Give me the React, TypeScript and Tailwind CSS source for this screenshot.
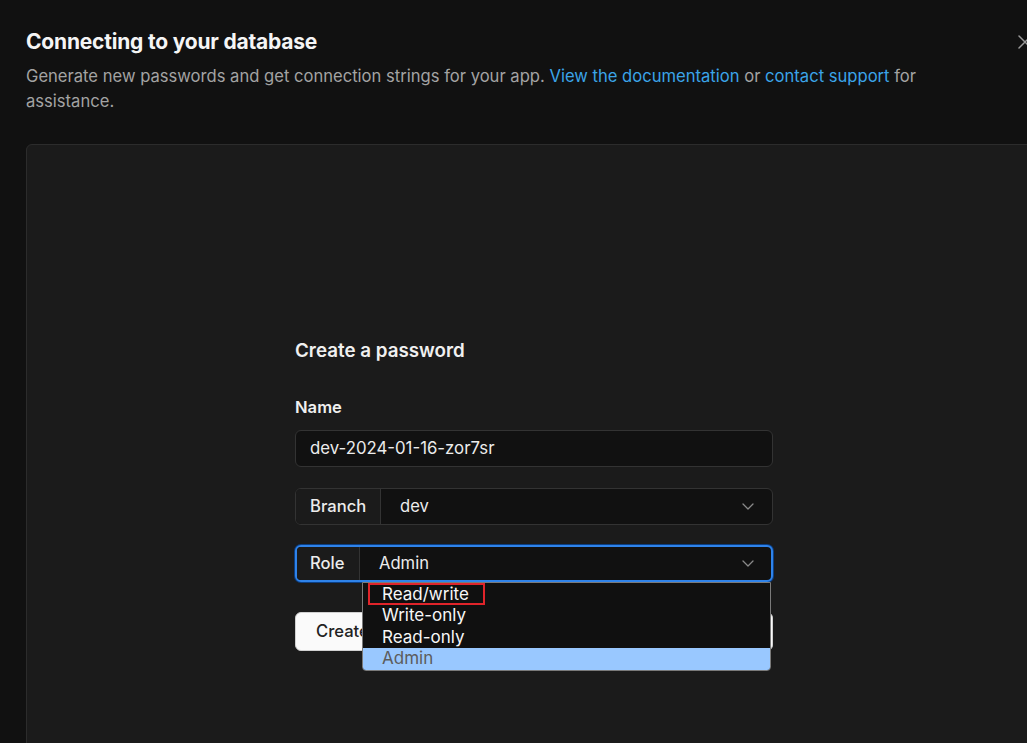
import React from "react";

function Chevron() {
  return (
    <svg width="12" height="7" viewBox="0 0 12 7" fill="none" className="shrink-0">
      <path d="M1 1l5 5 5-5" stroke="#8a8a8a" strokeWidth="1.3" strokeLinecap="round" strokeLinejoin="round" />
    </svg>
  );
}

export default function App() {
  return (
    <div
      className="relative w-[1027px] h-[743px] overflow-hidden bg-[#111111]"
      style={{ fontFamily: "Inter, 'Noto Sans', sans-serif" }}
    >
      <div className="w-[1068px] px-[26px] pt-[28px]">
        <h1 className="text-[21px] leading-[28px] font-bold text-[#f5f5f5] tracking-[-0.2px]">
          Connecting to your database
        </h1>
        <p className="mt-2 w-[930px] text-[16.6px] leading-[25px] text-[#a3a3a3]">
          Generate new passwords and get connection strings for your app.{" "}
          <span className="text-[#3ba4e8]">View the documentation</span> or{" "}
          <span className="text-[#3ba4e8]">contact support</span> for assistance.
        </p>
        <div className="mt-[30px] h-[700px] rounded-md border border-[#2c2c2c] bg-[#1b1b1b] pt-[192px]">
          <div className="relative mx-auto w-[478px]">
            <h2 className="text-[18.8px] leading-[28px] font-semibold text-[#f0f0f0]">Create a password</h2>
            <div className="mt-[30px] text-[16.6px] leading-[24px] font-semibold text-[#f0f0f0]">Name</div>
            <div className="mt-[11px] flex h-[37px] items-center rounded-md border border-[#333333] bg-[#111111] px-[14px] text-[16.8px] text-[#ececec]">
              dev-2024-01-16-zor7sr
            </div>
            <div className="mt-[21px] flex h-[37px] overflow-hidden rounded-md border border-[#333333] bg-[#111111] text-[16.6px]">
              <div className="flex w-[85px] items-center border-r border-[#333333] bg-[#1b1b1b] pl-[14px] font-medium text-[#ececec]">
                Branch
              </div>
              <div className="flex flex-1 items-center justify-between pl-[19px] pr-[18px] text-[#ececec]">
                <span>dev</span>
                <Chevron />
              </div>
            </div>
            <div className="mt-[20px] flex h-[37px] overflow-hidden rounded-md border-2 border-[#2f83ea] bg-[#111111] text-[16.6px] shadow-[0_0_0_1px_#0b3f84]">
              <div className="flex w-[63px] items-center border-r border-[#333333] bg-[#1b1b1b] pl-[13px] font-medium text-[#ececec]">
                Role
              </div>
              <div className="flex flex-1 items-center justify-between pl-[19px] pr-[17px] text-[#ececec]">
                <span>Admin</span>
                <Chevron />
              </div>
            </div>
            <button className="mt-[30px] flex h-[39px] w-full items-center rounded-md border border-[#d0d0d0] bg-[#fafafa] px-5 text-[16.6px] font-medium text-[#222222]">
              Create
            </button>

            <div className="absolute left-[67px] top-[245px] w-[409px] rounded-b-[4px] border border-[#7a7a7a] bg-[#101010] py-[0.5px] text-[17px]">
              <div className="flex h-[21.5px] items-center pl-[19px] text-[#f7f7f7]">Read/write</div>
              <div className="flex h-[21.5px] items-center pl-[19px] text-[#f7f7f7]">Write-only</div>
              <div className="flex h-[21.5px] items-center pl-[19px] text-[#f7f7f7]">Read-only</div>
              <div className="flex h-[21.5px] items-center rounded-b-[3px] bg-[#99c8ff] pl-[19px] text-[#5c5c5c]">Admin</div>
              <div className="absolute left-[5px] top-0 h-[22px] w-[117px] border-2 border-[#e0242a]" />
            </div>
          </div>
        </div>
      </div>
      <svg className="absolute left-[1018px] top-[35px]" width="14" height="14" viewBox="0 0 14 14" fill="none">
        <path d="M1 1l12 12M13 1L1 13" stroke="#9a9a9a" strokeWidth="1.5" strokeLinecap="round" />
      </svg>
    </div>
  );
}
